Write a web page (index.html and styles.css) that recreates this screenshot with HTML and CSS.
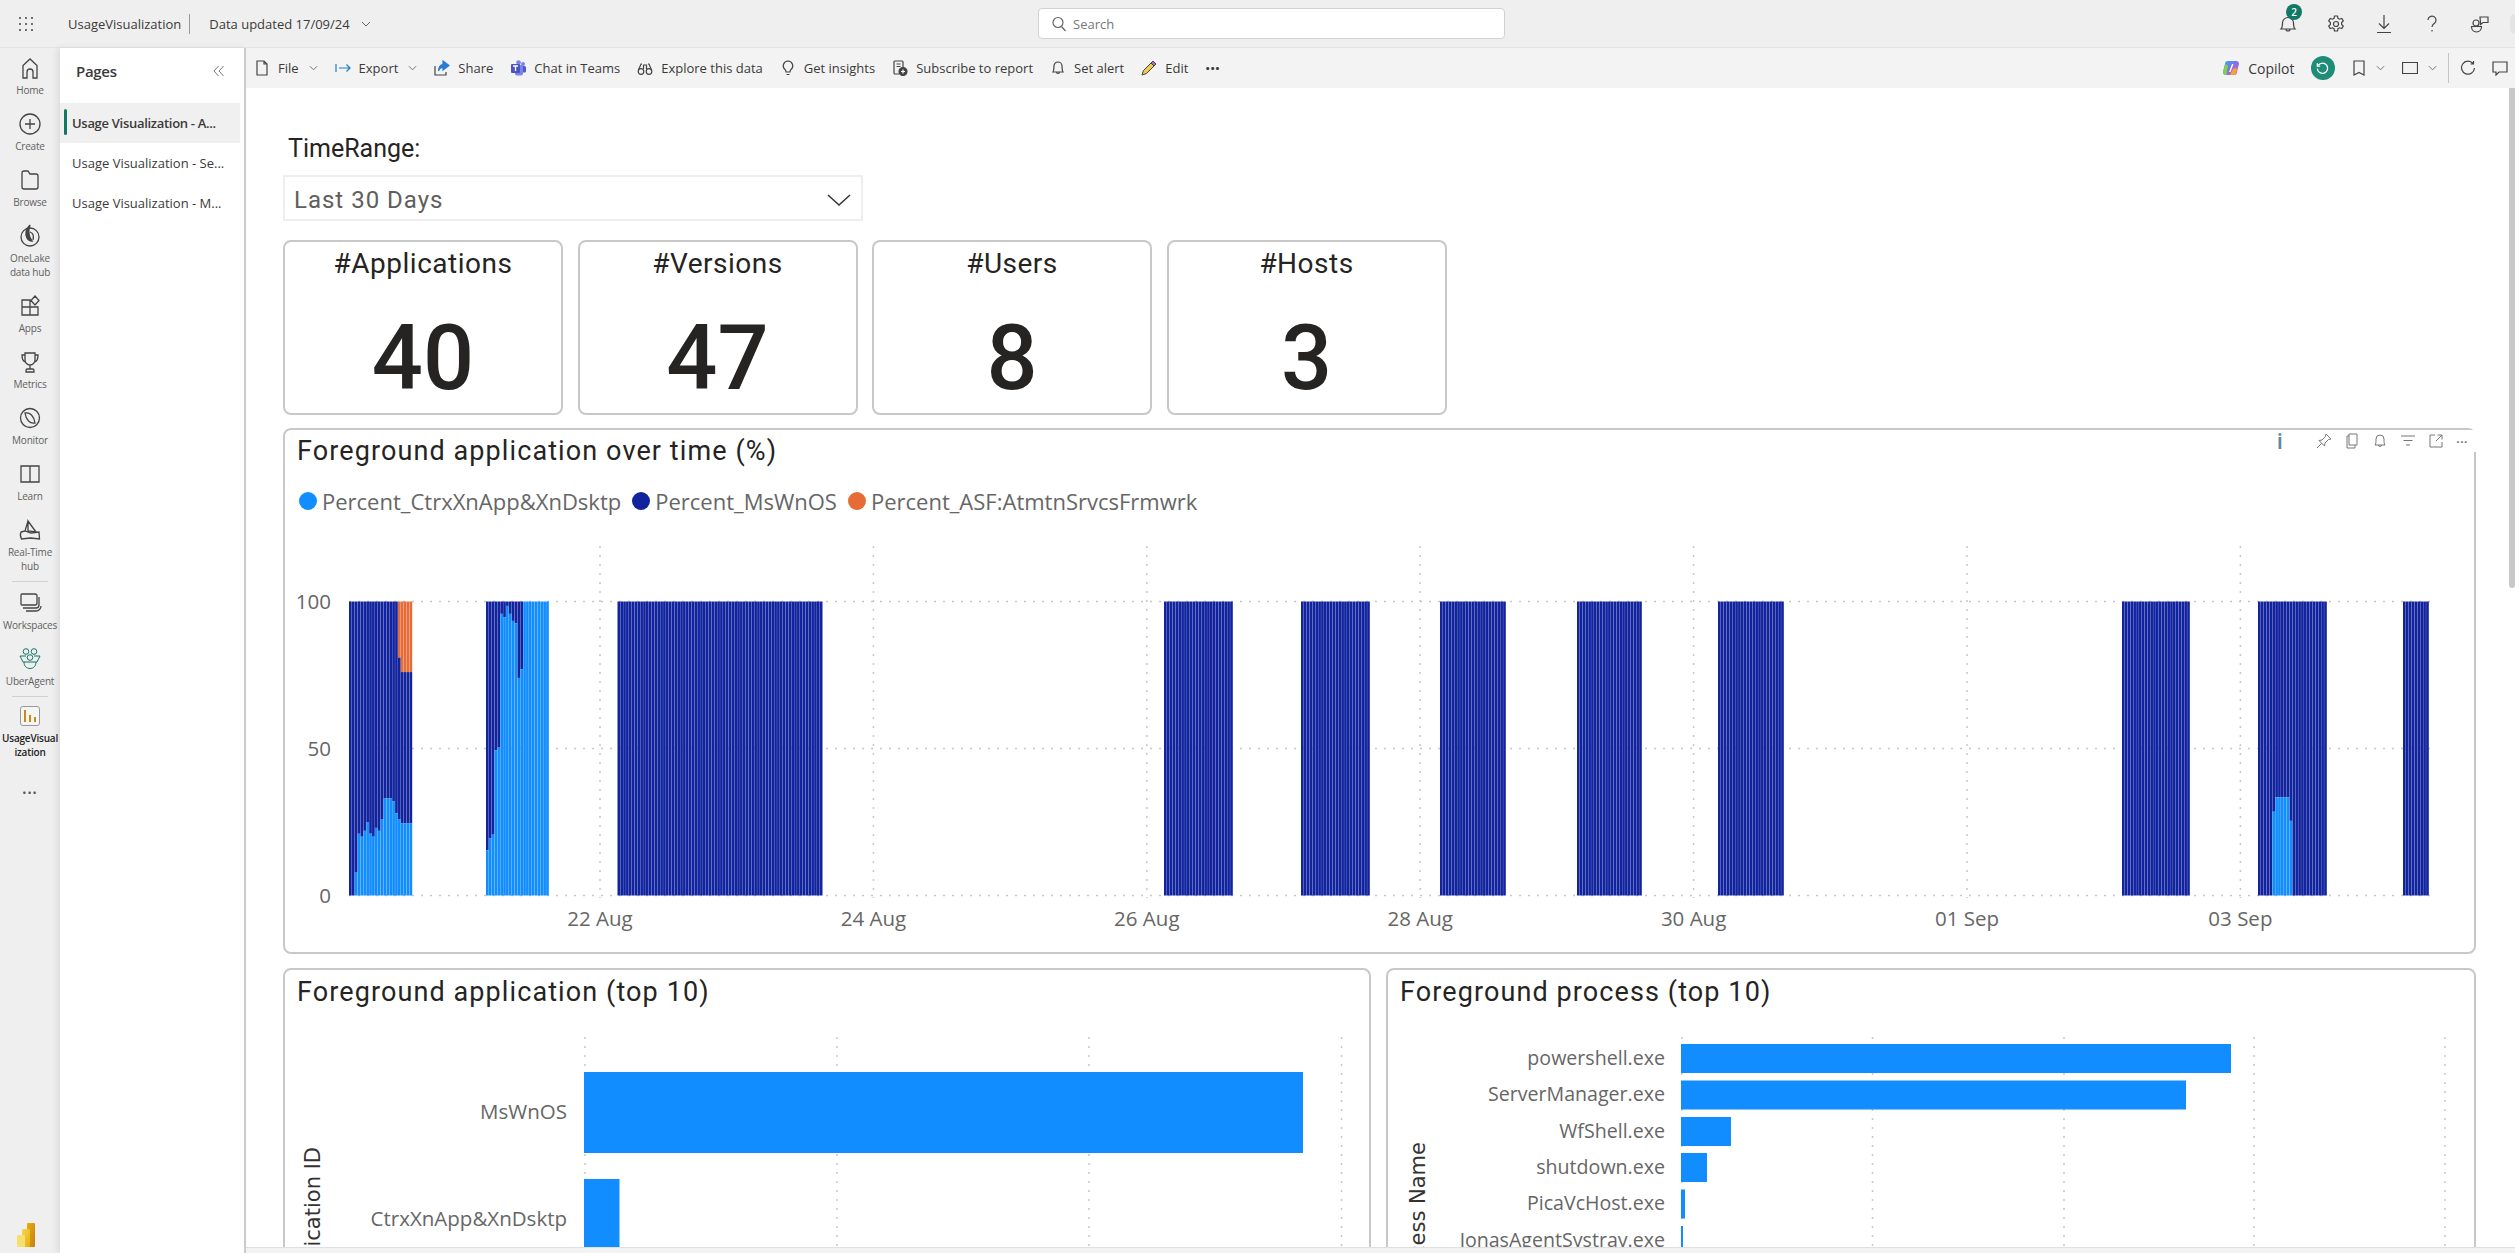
FILE: index.html
```html
<!DOCTYPE html>
<html lang="en">
<head>
  <meta charset="utf-8">
  <title>UsageVisualization</title>
  <link rel="stylesheet" href="styles.css">
</head>
<body>
  <!-- top bar -->
  <header class="topbar">
    <div class="top-left">
      <svg class="waffle" viewBox="0 0 16 16" width="16" height="16"><g fill="#444"><circle cx="2" cy="2" r="1"/><circle cx="8" cy="2" r="1"/><circle cx="14" cy="2" r="1"/><circle cx="2" cy="8" r="1"/><circle cx="8" cy="8" r="1"/><circle cx="14" cy="8" r="1"/><circle cx="2" cy="14" r="1"/><circle cx="8" cy="14" r="1"/><circle cx="14" cy="14" r="1"/></g></svg>
      <span class="report-name">UsageVisualization</span>
      <span class="data-updated">Data updated 17/09/24</span>
      <svg class="chev" viewBox="0 0 10 6" width="10" height="6"><path d="M1 1l4 4 4-4"/></svg>
    </div>
    <div class="search">
      <svg viewBox="0 0 16 16" width="16" height="16" class="ic"><circle cx="7" cy="6.500" r="5"/><path d="M10.500 10.500l4 4.500"/></svg>
      <span>Search</span>
    </div>
    <div class="top-right">
      <span class="bell-wrap">
        <svg viewBox="0 0 20 20" width="20" height="20" class="ic"><path d="M3 15c1.500-1.500 1.500-3 1.500-6a5.500 5.500 0 0 1 11 0c0 3 0 4.500 1.500 6zM8 15a2 2 0 0 0 4 0"/></svg>
        <span class="badge">2</span>
      </span>
      <svg viewBox="0 0 20 20" width="20" height="20" class="ic"><circle cx="10" cy="10" r="2.500"/><path d="M8.500 2h3l.5 2.300 1.600.9 2.200-.8 1.500 2.600-1.700 1.600v1.800l1.700 1.600-1.500 2.600-2.200-.8-1.600.9-.5 2.300h-3l-.5-2.300-1.600-.9-2.200.8-1.500-2.600 1.700-1.600V8.600L2.700 7l1.500-2.600 2.200.8L8 4.300z"/></svg>
      <svg viewBox="0 0 20 20" width="20" height="20" class="ic"><path d="M10 1v13M5 9.500l5 5 5-5M3 18.500h14"/></svg>
      <svg viewBox="0 0 20 20" width="20" height="20" class="ic"><path d="M6 6a4 4 0 1 1 6.500 3.200C11 10.400 10 11 10 13M10 16v1.500"/></svg>
      <svg viewBox="0 0 20 20" width="20" height="20" class="ic"><circle cx="6" cy="9" r="3"/><path d="M1.500 12.500h10c0 3-2 5.500-5 5.500s-5-2.500-5-5.500zM10 3h8v5.500h-5l-2.500 2V8.500z"/></svg>
      <span class="avatar"></span>
    </div>
  </header>

  <div class="layout">
    <!-- left rail -->
    <nav class="rail">
      <a class="rail-item">
        <svg viewBox="0 0 24 24" class="ic"><path d="M5 22V9.500L12 3l7 6.500V22h-4v-6a3 3 0 0 0-6 0v6z"/></svg>
        <span>Home</span>
      </a>
      <a class="rail-item">
        <svg viewBox="0 0 24 24" class="ic"><circle cx="12" cy="12" r="10"/><path d="M12 7v10M7 12h10"/></svg>
        <span>Create</span>
      </a>
      <a class="rail-item">
        <svg viewBox="0 0 24 24" class="ic"><path d="M4 5a2 2 0 0 1 2-2h4l2 3h6a2 2 0 0 1 2 2v11a2 2 0 0 1-2 2H6a2 2 0 0 1-2-2z"/></svg>
        <span>Browse</span>
      </a>
      <a class="rail-item">
        <svg viewBox="0 0 24 24" class="ic"><circle cx="12" cy="13" r="9"/><path d="M12 8c3 1 4 4 3 8"/><path class="solid" d="M12 1c-4 4-5 9-3 13 1 2 3 3 5 3-3-4-4-10-2-16z"/></svg>
        <span>OneLake<br>data hub</span>
      </a>
      <a class="rail-item">
        <svg viewBox="0 0 24 24" class="ic"><path d="M4 6h8v7H4zM4 13h8v8H4zM12 13h8v8h-8zM17 2l4 4.500-4 4.500-4-4.500z"/></svg>
        <span>Apps</span>
      </a>
      <a class="rail-item">
        <svg viewBox="0 0 24 24" class="ic"><path d="M7 3h10v7a5 5 0 0 1-10 0zM7 5H4c0 4 .8 6 3 7M17 5h3c0 4-.8 6-3 7M12 15v4M8 22v-1.500A1.500 1.500 0 0 1 9.500 19h5a1.500 1.500 0 0 1 1.500 1.500V22z"/></svg>
        <span>Metrics</span>
      </a>
      <a class="rail-item">
        <svg viewBox="0 0 24 24" class="ic"><circle cx="12" cy="12" r="9.500"/><path d="M7 7c5-1 9 3 10 10-5 1-9-3-10-10z"/></svg>
        <span>Monitor</span>
      </a>
      <a class="rail-item">
        <svg viewBox="0 0 24 24" class="ic"><path d="M3 4h18v16H3zM12 4v16"/></svg>
        <span>Learn</span>
      </a>
      <a class="rail-item">
        <svg viewBox="0 0 24 24" class="ic"><path d="M10 3l8 11-8-1zM10 3L7 13M3 14l4-1 6 2 8-1 .5 7-9-1-9 1c-1-2-1.500-5-.5-7z"/></svg>
        <span>Real-Time<br>hub</span>
      </a>
      <hr class="rail-sep">
      <a class="rail-item">
        <svg viewBox="0 0 24 24" class="ic"><path d="M4 3h13a2 2 0 0 1 2 2v7a2 2 0 0 1-2 2H4a1 1 0 0 1-1-1V4a1 1 0 0 1 1-1zM5 17h13a3 3 0 0 0 3-3V6M8 20h10a5 5 0 0 0 5-5"/></svg>
        <span>Workspaces</span>
      </a>
      <a class="rail-item rail-green">
        <svg viewBox="0 0 24 24" class="ic"><circle cx="8" cy="4.500" r="2.800"/><circle cx="16" cy="4.500" r="2.800"/><circle cx="12" cy="10.500" r="2.800"/><path d="M8 9H2l3 6h1M16 9h6l-3 6h-1M6 15h12c0 4-2.500 6.500-6 6.500S6 19 6 15z"/></svg>
        <span>UberAgent</span>
      </a>
      <hr class="rail-sep">
      <a class="rail-item rail-current">
        <span class="report-tile">
          <svg viewBox="0 0 20 20" width="20" height="20"><path fill="#c68a16" d="M4 4h2v12H4zM9 9h2v7H9zM14 11h2v5h-2z"/></svg>
        </span>
        <span>UsageVisual<br>ization</span>
      </a>
      <div class="rail-more">•••</div>
      <svg class="pbi-logo" viewBox="0 0 18 24" width="18" height="24">
        <defs>
          <linearGradient id="pbi1" x1="0" y1="0" x2="1" y2="1"><stop offset="0" stop-color="#e6ad10"/><stop offset="1" stop-color="#c87e0e"/></linearGradient>
          <linearGradient id="pbi2" x1="0" y1="0" x2="1" y2="1"><stop offset="0" stop-color="#f6d751"/><stop offset="1" stop-color="#e6ad10"/></linearGradient>
        </defs>
        <rect x="10" width="8" height="24" rx="1" fill="url(#pbi1)"/>
        <rect x="5" y="6" width="8" height="18" rx="1" fill="url(#pbi2)"/>
        <rect y="12" width="8" height="12" rx="1" fill="#f8de6f"/>
      </svg>
    </nav>

    <!-- pages panel -->
    <aside class="pages">
      <div class="pages-head">
        <span>Pages</span>
        <svg viewBox="0 0 12 12" width="12" height="12" class="ic thin"><path d="M5.500 1L1 6l4.500 5M10.500 1L6 6l4.500 5"/></svg>
      </div>
      <a class="page-link active">Usage Visualization - A...</a>
      <a class="page-link">Usage Visualization - Se...</a>
      <a class="page-link">Usage Visualization - M...</a>
    </aside>

    <main class="main">
      <!-- action toolbar -->
      <div class="toolbar">
        <div class="tool">
          <svg viewBox="0 0 16 16" class="ic"><path d="M3 1h7l3 3v11H3zM10 1v3h3"/></svg>
          <span>File</span>
          <svg class="chev" viewBox="0 0 10 6" width="9" height="6"><path d="M1 1l4 4 4-4"/></svg>
        </div>
        <div class="tool tool-wide">
          <svg viewBox="0 0 16 16" class="ic blue"><path d="M1 4v8M4 8h11M11.500 4.500L15 8l-3.500 3.500"/></svg>
          <span>Export</span>
          <svg class="chev" viewBox="0 0 10 6" width="9" height="6"><path d="M1 1l4 4 4-4"/></svg>
        </div>
        <div class="tool">
          <svg viewBox="0 0 16 16" class="ic"><path d="M1 6v9h11v-3"/><path class="blue-fill" d="M9 1l6 4.500L9 10V7.500C7 7.500 5.500 8.500 4.500 11c0-4 2-6.500 4.500-6.500z"/></svg>
          <span>Share</span>
        </div>
        <div class="tool">
          <svg viewBox="0 0 16 16"><circle cx="13" cy="4" r="2" fill="#7b83eb"/><circle cx="8.500" cy="2.500" r="2.300" fill="#7b83eb"/><rect x="9" y="6" width="7" height="6.500" rx="1.500" fill="#5059c9"/><rect x="5" y="5" width="8" height="10.500" rx="2" fill="#7b83eb"/><rect x="1" y="4" width="9" height="9" rx="1" fill="#4b53bc"/><path d="M3 6h5M5.500 6v5" stroke="#fff" stroke-width="1.300"/></svg>
          <span>Chat in Teams</span>
        </div>
        <div class="tool">
          <svg viewBox="0 0 16 16" class="ic"><path d="M5 4H4L1.500 10M11 4h1l2.500 6M6.500 9V5h3v4"/><circle cx="4" cy="11.500" r="2.800"/><circle cx="12" cy="11.500" r="2.800"/></svg>
          <span>Explore this data</span>
        </div>
        <div class="tool">
          <svg viewBox="0 0 16 16" class="ic"><path d="M8 1a4.800 4.800 0 0 0-3 8.500c.8.700 1 1.500 1 2.500h4c0-1 .2-1.800 1-2.500A4.800 4.800 0 0 0 8 1zM6.500 14.500h3"/></svg>
          <span>Get insights</span>
        </div>
        <div class="tool">
          <svg viewBox="0 0 16 16" class="ic"><path d="M7 14H3a1 1 0 0 1-1-1V2a1 1 0 0 1 1-1h7a1 1 0 0 1 1 1v5M4.500 4h4M4.500 6.500h4"/><circle class="solid" cx="11" cy="11.500" r="4"/><path stroke="#fff" d="M11 9.500v4M9 11.500h4"/></svg>
          <span>Subscribe to report</span>
        </div>
        <div class="tool">
          <svg viewBox="0 0 16 16" class="ic"><path d="M3 12c1-1.500 1-2.500 1-6a4 4 0 0 1 8 0c0 3.500 0 4.500 1 6zM6.500 12a1.500 1.500 0 0 0 3 0"/></svg>
          <span>Set alert</span>
        </div>
        <div class="tool">
          <svg viewBox="0 0 16 16"><path d="M12 1l3 3-9.500 9.500L1 15l1.500-4.500z" fill="#f2c94c" stroke="#444"/><path d="M12 1l3 3-2 2-3-3z" fill="#b06cb5" stroke="#444"/></svg>
          <span>Edit</span>
        </div>
        <div class="tool tool-dots">···</div>

        <div class="tools-right">
          <svg class="copilot" viewBox="0 0 16 16" width="16" height="16">
            <defs><linearGradient id="cop" x1="0" y1="0" x2="1" y2="1"><stop offset="0" stop-color="#2bb3e8"/><stop offset=".45" stop-color="#7b6ff0"/><stop offset="1" stop-color="#e86a8e"/></linearGradient></defs>
            <path fill="url(#cop)" d="M5 1h8a3 3 0 0 1 3 3l-2 8a3 3 0 0 1-3 3H3a3 3 0 0 1-3-3l2-8a3 3 0 0 1 3-3z"/>
            <path fill="#7fcf55" d="M0 12l1.500-6c.5-2 3-2 3.500 0L3.500 15H3a3 3 0 0 1-3-3z"/>
            <path fill="#f6a13a" d="M7 15l3-6c1-1 4-1 4 1l-1 3a3 3 0 0 1-3 2z"/>
            <path fill="#fff" d="M9 4h1.500L7.500 12H6z"/>
          </svg>
          <span class="copilot-label">Copilot</span>
          <span class="reset-btn">
            <svg viewBox="0 0 16 16" width="15" height="15"><path fill="none" stroke="#fff" stroke-width="1.400" d="M3.500 4.500A5.500 5.500 0 1 1 2.500 8M2.500 2.500v3h3"/></svg>
          </span>
          <svg viewBox="0 0 16 16" class="ic bookmark"><path d="M3 1h10v14l-5-2.500L3 15z"/></svg>
          <svg class="chev" viewBox="0 0 10 6" width="9" height="6"><path d="M1 1l4 4 4-4"/></svg>
          <svg viewBox="0 0 16 16" class="ic view-box"><path d="M.5 2.500h15v11H.5z"/></svg>
          <svg class="chev" viewBox="0 0 10 6" width="9" height="6"><path d="M1 1l4 4 4-4"/></svg>
          <span class="tool-sep"></span>
          <svg viewBox="0 0 16 16" class="ic"><path d="M13 3.500A6.500 6.500 0 1 0 14.500 8M13.500 1v3h-3"/></svg>
          <svg viewBox="0 0 16 16" class="ic"><path d="M1 2h14v10H7l-3 3v-3H1z"/></svg>
        </div>
      </div>

      <!-- report canvas -->
      <div class="canvas">
        <div class="scroll-thumb"></div>
        <div class="slicer-label">TimeRange:</div>
        <div class="slicer">
          <span>Last 30 Days</span>
          <svg viewBox="0 0 24 12" width="24" height="12"><path d="M1 1l11 10L23 1" fill="none" stroke="#333" stroke-width="1.500"/></svg>
        </div>

        <div class="kpi-row">
          <div class="kpi"><div class="kpi-title">#Applications</div><div class="kpi-value">40</div></div>
          <div class="kpi"><div class="kpi-title">#Versions</div><div class="kpi-value">47</div></div>
          <div class="kpi"><div class="kpi-title">#Users</div><div class="kpi-value">8</div></div>
          <div class="kpi"><div class="kpi-title">#Hosts</div><div class="kpi-value">3</div></div>
        </div>

        <section class="card chart-card">
          <h2>Foreground application over time (%)</h2>
          <div class="visual-actions">
            <span class="info">i</span>
            <svg viewBox="0 0 16 16" class="ic thin"><path d="M10 1l5 5-2.500.5L9 10l-.5 3L3 7.500 6 7l3.500-3.500zM5.500 10.500L1 15"/></svg>
            <svg viewBox="0 0 16 16" class="ic thin"><path d="M5 1h8v11H5zM5 3H3v12h8v-3"/></svg>
            <svg viewBox="0 0 16 16" class="ic thin"><path d="M3 12c1-1.500 1-2.500 1-6a4 4 0 0 1 8 0c0 3.500 0 4.500 1 6zM6.500 12a1.500 1.500 0 0 0 3 0"/></svg>
            <svg viewBox="0 0 16 16" class="ic thin"><path d="M1 3h14M3.500 7.500h9M6 12h4"/></svg>
            <svg viewBox="0 0 16 16" class="ic thin"><path d="M7 2H2v12h12V9M9.500 2H14v4.500M14 2L8 8"/></svg>
            <span class="more">···</span>
          </div>
          <div class="legend">
            <span class="legend-item"><i class="dot dot-light"></i>Percent_CtrxXnApp&amp;XnDsktp</span>
            <span class="legend-item"><i class="dot dot-dark"></i>Percent_MsWnOS</span>
            <span class="legend-item"><i class="dot dot-orange"></i>Percent_ASF:AtmtnSrvcsFrmwrk</span>
          </div>
          <svg id="time-chart" class="chart-svg" viewBox="285 530 2189 422"></svg>
        </section>

        <div class="bottom-row">
          <section class="card bar-card">
            <h2>Foreground application (top 10)</h2>
            <svg id="app-chart" class="bar-svg" viewBox="285 1020 1085 240"></svg>
          </section>
          <section class="card bar-card">
            <h2>Foreground process (top 10)</h2>
            <svg id="proc-chart" class="bar-svg" viewBox="1388 1020 1085 240"></svg>
          </section>
        </div>
      </div>
      <div class="bottom-strip"></div>
    </main>
  </div>

  <script src="script.js"></script>
</body>
</html>
```

FILE: styles.css
```css
* {
  box-sizing: border-box;
}

body {
  margin: 0;
  height: 100vh;
  overflow: hidden;
  display: flex;
  flex-direction: column;
  background: #fff;
  color: #3b3a39;
  font-family: "Open Sans", "Noto Sans", sans-serif;
  font-size: 13px;
}

.ic {
  fill: none;
  stroke: #444;
  stroke-width: 1.2;
}

.ic .solid {
  fill: #444;
}

.ic.thin {
  stroke: #777;
  stroke-width: 1;
}

.chev {
  fill: none;
  stroke: #666;
  stroke-width: 1;
  flex: none;
}

/* top bar */
.topbar {
  height: 48px;
  flex: none;
  display: flex;
  align-items: center;
  background: #efefef;
  border-bottom: 1px solid #e4e4e4;
}

.top-left {
  width: 1038px;
  display: flex;
  align-items: center;
  padding-left: 18px;
}

.report-name {
  margin-left: 34px;
  padding-right: 8px;
  line-height: 20px;
  border-right: 1px solid #999;
}

.data-updated {
  margin-left: 19px;
  margin-right: 11px;
}

.search {
  width: 467px;
  height: 31px;
  display: flex;
  align-items: center;
  gap: 6px;
  padding-left: 12px;
  background: #fff;
  border: 1px solid #d1d1d1;
  border-radius: 4px;
  color: #777;
}

.search .ic {
  stroke: #666;
}

.top-right {
  margin-left: auto;
  display: flex;
  align-items: center;
  gap: 28px;
}

.avatar {
  width: 5px;
  height: 20px;
  margin-left: -8px;
  border-radius: 5px 0 0 5px;
  background: #e4e4e4;
}

.bell-wrap {
  position: relative;
  display: flex;
}

.badge {
  position: absolute;
  top: -10px;
  left: 8px;
  width: 16px;
  height: 16px;
  border-radius: 50%;
  background: #117865;
  color: #fff;
  font-size: 10px;
  font-weight: 600;
  line-height: 16px;
  text-align: center;
}

.layout {
  flex: 1;
  display: flex;
  min-height: 0;
}

/* left rail */
.rail {
  width: 60px;
  flex: none;
  position: relative;
  padding-top: 8px;
  background: #efefef;
  text-align: center;
}

.rail-item {
  display: block;
  margin-bottom: 15px;
  color: #616161;
  font-size: 10px;
  line-height: 14px;
  letter-spacing: -.2px;
}

.rail-item .ic {
  display: block;
  width: 24px;
  height: 24px;
  margin: 0 auto 3px;
  stroke-width: 1.3;
}

.rail-item span {
  display: block;
}

.rail-green .ic {
  stroke: #117865;
}

.rail-item.rail-green .ic {
  stroke-width: 1;
}

.rail-current {
  color: #252423;
  font-weight: 600;
}

.rail-current .report-tile {
  width: 20px;
  height: 20px;
  margin: 2px auto 5px;
  background: #f5f5f5;
  border: 1px solid #999;
  border-radius: 3px;
}

.report-tile svg {
  display: block;
  margin: -1px;
}

.rail-sep {
  width: 36px;
  margin: -7px auto 9px;
  border: 0;
  border-top: 1px solid #d1d1d1;
}

.rail-more {
  margin-top: 26px;
  font-size: 11px;
  letter-spacing: 1px;
  color: #555;
}

.pbi-logo {
  position: absolute;
  left: 17px;
  bottom: 6px;
}

/* pages panel */
.pages {
  width: 186px;
  flex: none;
  background: #fff;
  border-right: 2px solid #cbcbcb;
  box-shadow: -3px 0 6px rgba(0, 0, 0, .08);
  z-index: 1;
}

.pages-head {
  height: 55px;
  display: flex;
  align-items: center;
  justify-content: space-between;
  padding: 0 19px 10px 16px;
  font-size: 15px;
  font-weight: 600;
  letter-spacing: -.3px;
}

.page-link {
  display: block;
  width: 180px;
  height: 40px;
  padding-left: 12px;
  line-height: 40px;
  white-space: nowrap;
}

.page-link.active {
  position: relative;
  background: #f0f0f0;
  font-weight: 600;
  letter-spacing: -.3px;
}

.page-link.active::before {
  content: "";
  position: absolute;
  left: 4px;
  top: 6px;
  width: 3px;
  height: 26px;
  border-radius: 2px;
  background: #117865;
}

/* action toolbar */
.main {
  flex: 1;
  min-width: 0;
  display: flex;
  flex-direction: column;
  position: relative;
}

.toolbar {
  height: 40px;
  flex: none;
  display: flex;
  align-items: center;
  gap: 17px;
  padding-left: 8px;
  background: #f3f3f3;
}

.tool {
  display: flex;
  align-items: center;
  gap: 8px;
  white-space: nowrap;
}

.tool > svg:first-child {
  width: 16px;
  height: 16px;
}

.tool .chev {
  margin-left: 2px;
}

.ic.blue {
  stroke: #1f7fc4;
}

.blue-fill {
  fill: #2b7cd3;
  stroke: #2b7cd3;
}

.tool-dots {
  font-size: 17px;
  font-weight: 700;
}

.tools-right {
  margin-left: auto;
  display: flex;
  align-items: center;
  padding-right: 7px;
}

.tools-right > .ic {
  width: 16px;
  height: 16px;
  flex: none;
}

.copilot-label {
  margin: 0 16px 0 9px;
  font-size: 14px;
}

.reset-btn {
  width: 24px;
  height: 24px;
  margin-right: 16px;
  display: flex;
  align-items: center;
  justify-content: center;
  border-radius: 50%;
  background: #1e8c76;
}

.tools-right .bookmark {
  margin-right: 9px;
}

.tools-right .view-box {
  margin: 0 9.5px 0 17.5px;
}

.tool-sep {
  width: 1px;
  height: 30px;
  margin: 0 11px 0 11.5px;
  background: #c4c4c4;
}

.tools-right .ic:last-child {
  margin-left: 16px;
}

/* report canvas */
.canvas {
  flex: 1;
  min-height: 0;
  overflow: hidden;
  position: relative;
  padding: 46px 0 0 37px;
  font-family: Roboto, "Liberation Sans", sans-serif;
  color: #252423;
}

.scroll-thumb {
  position: absolute;
  top: 0;
  right: 0;
  width: 6px;
  height: 500px;
  border-radius: 0 0 3px 3px;
  background: #c8c8c8;
}

.slicer-label {
  height: 28px;
  margin-left: 5px;
  padding-top: 1px;
  font-size: 25px;
  line-height: 28px;
}

.slicer {
  width: 580px;
  height: 46px;
  margin-top: 13px;
  display: flex;
  align-items: center;
  justify-content: space-between;
  padding: 4px 10px 0 9px;
  border: 2px solid #eee;
  color: #605e5c;
  font-size: 24px;
  letter-spacing: 1px;
}

.kpi-row {
  display: flex;
  gap: 14.5px;
  margin-top: 19px;
}

.kpi {
  width: 280px;
  height: 175px;
  border: 2px solid #c8c8c8;
  border-radius: 8px;
  text-align: center;
}

.kpi-title {
  margin-top: 7px;
  font-size: 28px;
  line-height: 30px;
  letter-spacing: .5px;
}

.kpi-value {
  margin-top: 30px;
  font-size: 90px;
  line-height: 100px;
  font-weight: 500;
}

.card {
  position: relative;
  border: 2px solid #c8c8c8;
  border-radius: 8px;
  background: #fff;
}

.card h2 {
  margin: 0;
  padding-left: 12px;
  font-size: 27px;
  font-weight: 400;
  line-height: 42px;
  letter-spacing: 1.1px;
}

.chart-card {
  width: 2193px;
  height: 526px;
  margin-top: 13px;
  display: flex;
  flex-direction: column;
}

.legend {
  height: 40px;
  margin: 9px 0 0 14px;
  display: flex;
  align-items: center;
  gap: 11px;
  font-family: "Open Sans", sans-serif;
  font-size: 22px;
  color: #666;
}

.legend-item {
  display: flex;
  align-items: center;
  gap: 5px;
}

.dot {
  width: 18px;
  height: 18px;
  border-radius: 50%;
}

.dot-light {
  background: #118dff;
}

.dot-dark {
  background: #12239e;
}

.dot-orange {
  background: #e66c37;
}

.chart-svg {
  display: block;
  width: 2189px;
  height: 422px;
  margin-top: 9px;
}

.visual-actions {
  position: absolute;
  top: 0;
  right: -2px;
  width: 206px;
  height: 22px;
  display: flex;
  align-items: center;
  gap: 12px;
  padding-left: 7px;
  background: #fff;
}

.visual-actions .ic {
  width: 16px;
  height: 16px;
}

.visual-actions .info {
  margin-right: 21px;
  width: 6px;
  font-size: 22px;
  font-weight: 500;
  color: #5d86a8;
}

.visual-actions .more {
  color: #777;
  font-weight: 700;
}

.bottom-row {
  display: grid;
  grid-template-columns: 1088px 1090px;
  gap: 15px;
  width: 2193px;
  margin-top: 14px;
}

.bar-card {
  height: 320px;
}

.bar-card h2 {
  line-height: 44px;
  height: 50px;
}

.bar-svg {
  display: block;
  width: 1085px;
  height: 240px;
}

.bottom-strip {
  height: 6px;
  flex: none;
  background: #f3f3f3;
  border-top: 1px solid #e0e0e0;
}

/* chart text */
.axis-label {
  font-family: "Open Sans", sans-serif;
  font-size: 20.5px;
  fill: #666;
}

#proc-chart .axis-label {
  font-size: 19.6px;
}

.axis-title {
  font-family: "DejaVu Sans", sans-serif;
  font-size: 21px;
  fill: #333;
}

.grid-line {
  stroke: #c8c8c8;
  stroke-width: 1.5;
  stroke-dasharray: 2 7;
}
```

FILE: script.js
```js
const SVG_NS = "http://www.w3.org/2000/svg";
const LIGHT = "#118DFF";
const DARK = "#12239E";
const ORANGE = "#E66C37";

function el(parent, name, attrs, text) {
  const node = document.createElementNS(SVG_NS, name);
  for (const key in attrs) node.setAttribute(key, attrs[key]);
  if (text) node.textContent = text;
  parent.appendChild(node);
  return node;
}

// stacked columns over time, page coordinates (the svg viewBox starts at the card)
const Y0 = 895.5;
const Y100 = 601.5;
const yPos = (v) => Y0 - (Y0 - Y100) * v / 100;

const groups = [
  { from: 349, to: 412.4, n: 22,
    light: [0, 0, 8, 21, 20, 22, 25, 21, 20, 23, 22, 26, 33, 33, 33, 32, 28, 26, 24.5, 24.5, 24.5, 24.5],
    orange: { 17: 81, 18: 76, 19: 76, 20: 76, 21: 76 } },
  { from: 486, to: 549, n: 22,
    light: [15.4, 19.5, 20.7, 49.4, 50.3, 95.8, 94.7, 98.5, 95.8, 93.4, 92.6, 74, 77, 100, 100, 100, 100, 100, 100, 100, 100, 100] },
  { from: 617.5, to: 822.7, n: 72 },
  { from: 1164, to: 1233, n: 24 },
  { from: 1301, to: 1370, n: 24 },
  { from: 1440, to: 1506, n: 23 },
  { from: 1577, to: 1642, n: 23 },
  { from: 1718, to: 1784, n: 23 },
  { from: 2122, to: 2190, n: 24 },
  { from: 2258, to: 2327, n: 24,
    light: [0, 0, 0, 0, 0, 28.5, 33.4, 33.4, 33.4, 33.4, 33.4, 25.4] },
  { from: 2403, to: 2429, n: 9 },
];

function drawTimeChart() {
  const svg = document.getElementById("time-chart");
  [100, 50, 0].forEach((v) => {
    el(svg, "line", { class: "grid-line", x1: 349, x2: 2430, y1: yPos(v), y2: yPos(v) });
    el(svg, "text", { class: "axis-label", x: 331, y: yPos(v) + 7, "text-anchor": "end" }, String(v));
  });
  ["22 Aug", "24 Aug", "26 Aug", "28 Aug", "30 Aug", "01 Sep", "03 Sep"].forEach((label, i) => {
    const x = 600 + i * 273.4;
    el(svg, "line", { class: "grid-line", x1: x, x2: x, y1: 546, y2: 898 });
    el(svg, "text", { class: "axis-label", x: x, y: 926, "text-anchor": "middle" }, label);
  });
  groups.forEach((g) => {
    const w = (g.to - g.from) / g.n;
    for (let i = 0; i < g.n; i++) {
      const x = g.from + i * w;
      const light = (g.light && g.light[i]) || 0;
      const orange = g.orange && g.orange[i];
      const top = orange || 100;
      const bar = (a, b, fill) => el(svg, "rect", {
        x: x, width: w - 0.2, y: yPos(b), height: yPos(a) - yPos(b), fill: fill,
      });
      if (top > light) bar(light, top, DARK);
      if (light) bar(0, light, LIGHT);
      if (orange) bar(orange, 100, ORANGE);
    }
  });
}

// horizontal bars, clipped by the bottom of the canvas
function drawBars(id, opts) {
  const svg = document.getElementById(id);
  opts.grid.forEach((x) => {
    el(svg, "line", { class: "grid-line", x1: x, x2: x, y1: 1037, y2: 1260 });
  });
  opts.bars.forEach((b) => {
    el(svg, "rect", { x: opts.x0, y: b.y, width: b.right - opts.x0, height: opts.h, fill: LIGHT });
    el(svg, "text", { class: "axis-label", x: opts.labelX, y: b.y + opts.h / 2 + 6, "text-anchor": "end" }, b.label);
  });
  el(svg, "text", {
    class: "axis-title",
    transform: "translate(" + opts.titleX + " " + opts.titleY + ") rotate(-90)",
    "text-anchor": "end",
  }, opts.title);
}

drawTimeChart();

drawBars("app-chart", {
  x0: 584, h: 81, labelX: 567, titleX: 320, titleY: 1147, title: "Application ID",
  grid: [585, 837, 1089, 1341.5],
  bars: [
    { label: "MsWnOS", y: 1072, right: 1303 },
    { label: "CtrxXnApp&XnDsktp", y: 1179, right: 619.5 },
  ],
});

drawBars("proc-chart", {
  x0: 1681, h: 29, labelX: 1665, titleX: 1425, titleY: 1142, title: "Process Name",
  grid: [1682, 1872.5, 2064, 2254, 2445],
  bars: [
    { label: "powershell.exe", y: 1044, right: 2231 },
    { label: "ServerManager.exe", y: 1080.5, right: 2186 },
    { label: "WfShell.exe", y: 1117, right: 1731 },
    { label: "shutdown.exe", y: 1153, right: 1707 },
    { label: "PicaVcHost.exe", y: 1189.5, right: 1685 },
    { label: "JonasAgentSystray.exe", y: 1226, right: 1683 },
  ],
});
```
